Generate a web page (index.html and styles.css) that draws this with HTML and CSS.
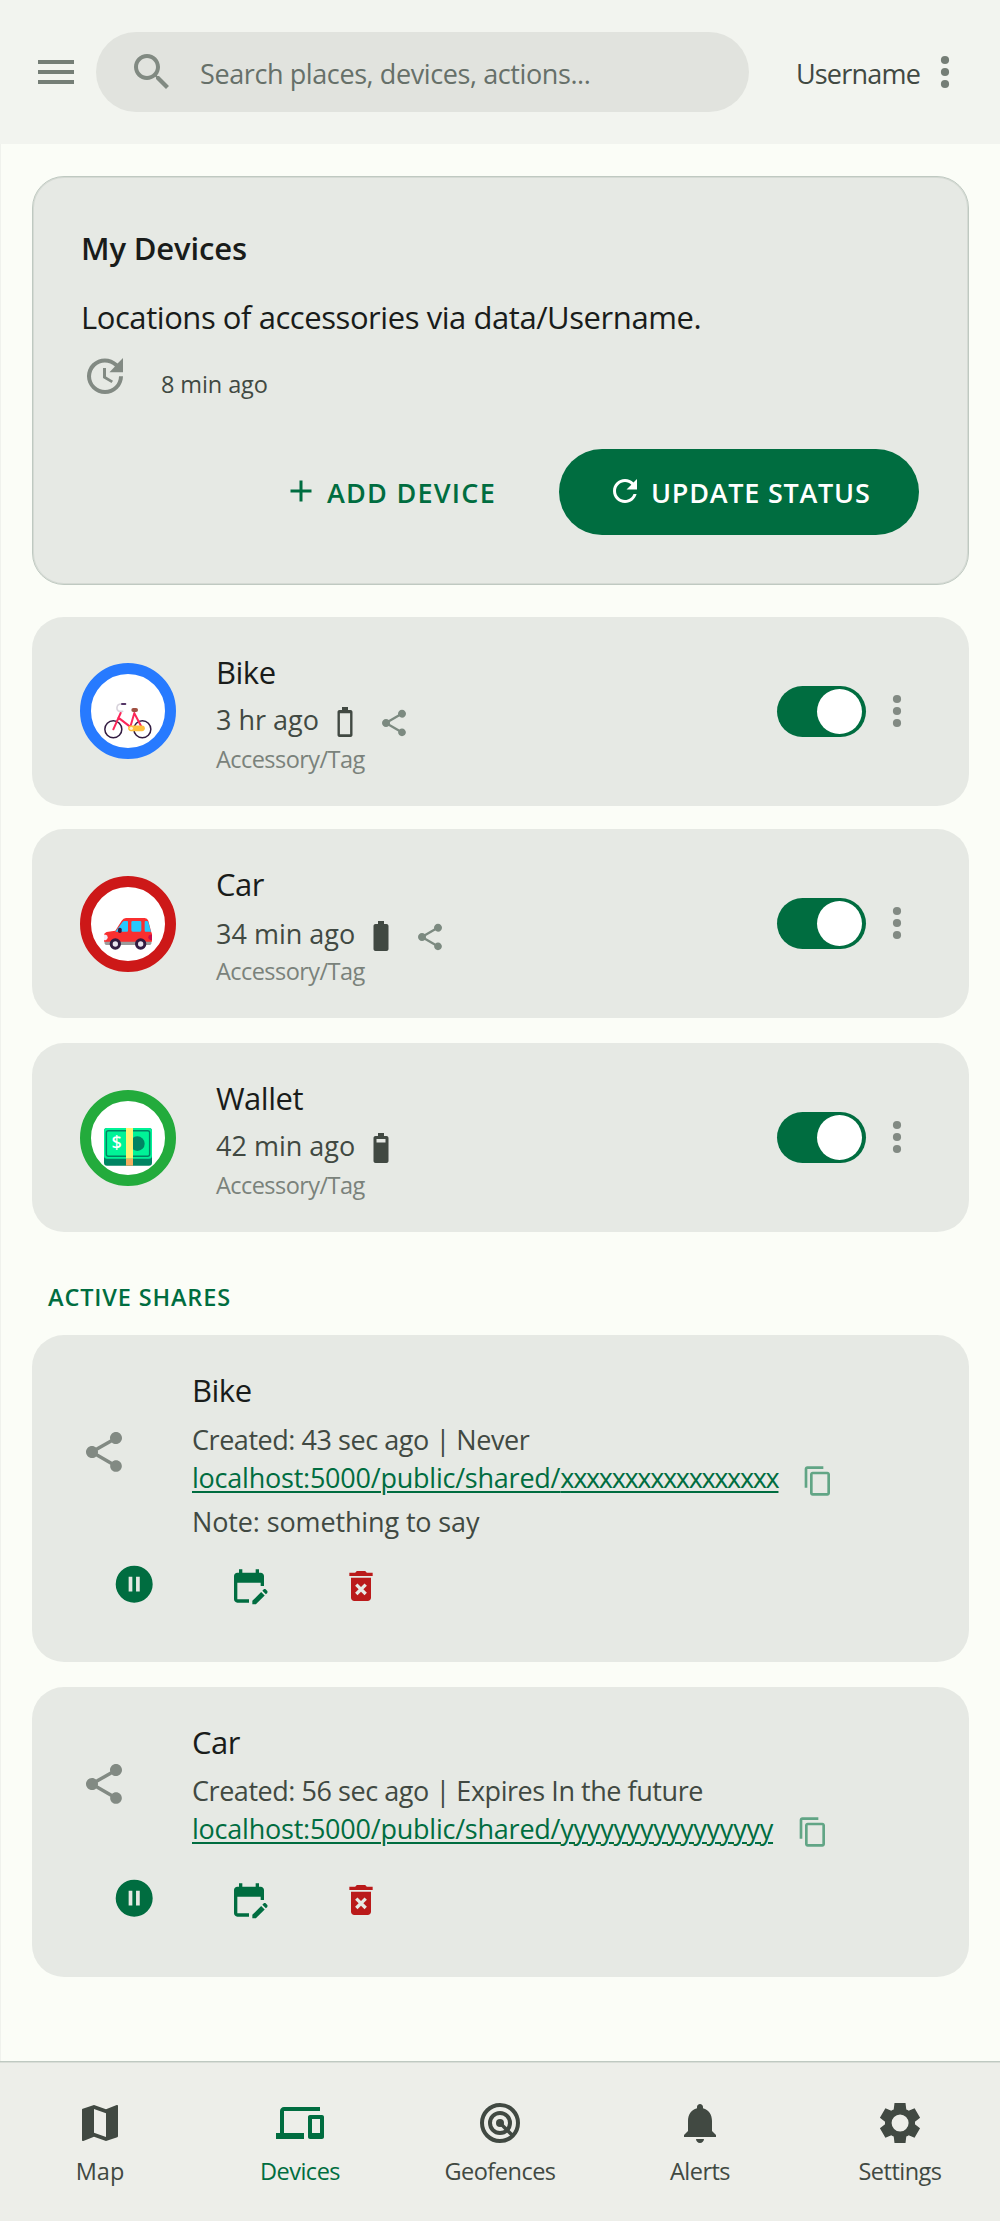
FILE: index.html
```html
<!DOCTYPE html>
<html lang="en">
<head>
<meta charset="utf-8">
<title>My Devices</title>
<link rel="stylesheet" href="styles.css">
</head>
<body>
<svg class="sprite" aria-hidden="true">
  <symbol id="menu" viewBox="0 0 24 24"><path d="M3 18h18v-2H3v2zm0-5h18v-2H3v2zm0-7v2h18V6H3z"/></symbol>
  <symbol id="search" viewBox="0 0 24 24"><path d="M15.5 14h-.79l-.28-.27C15.41 12.59 16 11.11 16 9.5 16 5.91 13.09 3 9.500 3S3 5.910 3 9.500 5.910 16 9.500 16c1.610 0 3.090-.59 4.230-1.570l.27.28v.79l5 4.990L20.490 19l-4.990-5zm-6 0C7.010 14 5 11.990 5 9.500S7.010 5 9.500 5 14 7.010 14 9.500 11.990 14 9.500 14z"/></symbol>
  <symbol id="more" viewBox="0 0 24 24"><circle cx="12" cy="6" r="2.050"/><circle cx="12" cy="12" r="2.050"/><circle cx="12" cy="18" r="2.050"/></symbol>
  <symbol id="history" viewBox="0 0 24 24"><path d="M21 10.120h-6.780l2.740-2.820c-2.730-2.700-7.150-2.800-9.880-.1-2.730 2.710-2.730 7.080 0 9.790s7.150 2.710 9.880 0C18.320 15.650 19 14.080 19 12.100h2c0 1.980-.88 4.550-2.640 6.290-3.510 3.480-9.210 3.480-12.720 0-3.500-3.470-3.530-9.110-.02-12.580s9.140-3.470 12.650 0L21 3v7.120zM12.500 8v4.250l3.500 2.080-.72 1.210L11 13V8h1.500z"/></symbol>
  <symbol id="add" viewBox="0 0 24 24"><path d="M19 13h-6v6h-2v-6H5v-2h6V5h2v6h6v2z"/></symbol>
  <symbol id="refresh" viewBox="0 0 24 24"><path d="M17.650 6.350C16.200 4.900 14.210 4 12 4c-4.420 0-7.990 3.580-7.990 8s3.570 8 7.990 8c3.730 0 6.840-2.550 7.730-6h-2.080c-.82 2.330-3.040 4-5.650 4-3.310 0-6-2.690-6-6s2.690-6 6-6c1.660 0 3.140.69 4.220 1.780L13 11h7V4l-2.350 2.350z"/></symbol>
  <symbol id="battery-empty" viewBox="0 0 24 24"><path fill-rule="evenodd" d="M15.670 4H14V2h-4v2H8.330C7.600 4 7 4.600 7 5.330v15.330C7 21.400 7.600 22 8.330 22h7.330c.74 0 1.340-.6 1.340-1.330V5.330C17 4.600 16.400 4 15.670 4zM8.600 6.200h6.800v14H8.600z"/></symbol>
  <symbol id="battery-full" viewBox="0 0 24 24"><path d="M15.670 4H14V2h-4v2H8.330C7.600 4 7 4.600 7 5.330v15.330C7 21.400 7.600 22 8.330 22h7.330c.74 0 1.340-.6 1.340-1.330V5.330C17 4.600 16.400 4 15.670 4z"/></symbol>
  <symbol id="battery-high" viewBox="0 0 24 24"><path fill-rule="evenodd" d="M15.670 4H14V2h-4v2H8.330C7.600 4 7 4.600 7 5.330v15.330C7 21.400 7.600 22 8.330 22h7.330c.74 0 1.340-.6 1.340-1.330V5.330C17 4.600 16.400 4 15.670 4zM9 6h6v2.300H9z"/></symbol>
  <symbol id="share" viewBox="0 0 24 24"><path d="M18 16.080c-.76 0-1.440.3-1.960.77L8.910 12.700c.05-.23.09-.46.09-.7s-.04-.47-.09-.7l7.050-4.110c.54.5 1.250.81 2.040.81 1.660 0 3-1.340 3-3s-1.340-3-3-3-3 1.340-3 3c0 .24.04.47.09.7L8.040 9.810C7.500 9.310 6.790 9 6 9c-1.660 0-3 1.340-3 3s1.340 3 3 3c.79 0 1.500-.31 2.040-.81l7.120 4.160c-.05.21-.08.43-.08.65 0 1.610 1.310 2.920 2.920 2.920s2.920-1.310 2.920-2.920-1.310-2.920-2.920-2.920z"/></symbol>
  <symbol id="copy" viewBox="0 0 24 24"><path d="M16 1H4c-1.100 0-2 .9-2 2v14h2V3h12V1zm3 4H8c-1.100 0-2 .9-2 2v14c0 1.100.9 2 2 2h11c1.100 0 2-.9 2-2V7c0-1.100-.9-2-2-2zm0 16H8V7h11v14z"/></symbol>
  <symbol id="pause" viewBox="0 0 24 24"><path fill-rule="evenodd" d="M12 2a10 10 0 1 0 0 20 10 10 0 0 0 0-20zM11 16H9V8h2v8zm4 0h-2V8h2v8z"/></symbol>
  <symbol id="calendar-edit" viewBox="0 0 24 24"><path d="M12 22H5c-1.110 0-2-.9-2-2l.01-14c0-1.100.88-2 1.990-2h1V2h2v2h8V2h2v2h1c1.100 0 2 .9 2 2v6h-2v-2H5v10h7v2zm10.130-5.010.71-.71c.39-.39.39-1.020 0-1.410l-.71-.71c-.39-.39-1.020-.39-1.410 0l-.71.71 2.120 2.120zm-.71.71-5.300 5.300H14v-2.120l5.300-5.300 2.120 2.120z"/></symbol>
  <symbol id="delete" viewBox="0 0 24 24"><path fill-rule="evenodd" d="M6 19c0 1.100.9 2 2 2h8c1.100 0 2-.9 2-2V7H6v12zm2.460-7.120 1.410-1.410L12 12.590l2.120-2.120 1.410 1.410L13.410 14l2.120 2.120-1.410 1.410L12 15.410l-2.120 2.120-1.410-1.410L10.590 14zM15.500 4l-1-1h-5l-1 1H5v2h14V4z"/></symbol>
  <symbol id="map" viewBox="0 0 24 24"><path fill-rule="evenodd" d="M20.500 3l-.16.03L15 5.100 9 3 3.360 4.900c-.21.07-.36.25-.36.48V20.500c0 .28.22.5.5.5l.16-.03L9 18.900l6 2.100 5.640-1.900c.21-.07.36-.25.36-.48V3.500c0-.28-.22-.5-.5-.5zM15 19l-6-2.110V5l6 2.110V19z"/></symbol>
  <symbol id="devices" viewBox="0 0 24 24"><path d="M4 6h18V4H4c-1.100 0-2 .9-2 2v11H0v3h14v-3H4V6zm19 2h-6c-.55 0-1 .45-1 1v10c0 .55.45 1 1 1h6c.55 0 1-.45 1-1V9c0-.55-.45-1-1-1zm-1 9h-4v-7h4v7z"/></symbol>
  <symbol id="geofence" viewBox="0 0 24 24"><g fill="none" stroke="currentColor" stroke-width="2"><circle cx="12" cy="12" r="9"/><circle cx="12" cy="12" r="5"/><path d="M12 12l6.400 6.400" stroke-width="1.700"/></g><circle cx="12" cy="12" r="2"/></symbol>
  <symbol id="bell" viewBox="0 0 24 24"><path d="M12 22c1.100 0 2-.9 2-2h-4c0 1.100.89 2 2 2zm6-6v-5c0-3.070-1.640-5.640-4.500-6.320V4c0-.83-.67-1.500-1.500-1.500s-1.500.67-1.500 1.500v.68C7.630 5.360 6 7.920 6 11v5l-2 2v1h16v-1l-2-2z"/></symbol>
  <symbol id="gear" viewBox="0 -960 960 960"><path d="m370-80-16-128q-13-5-24.500-12T307-235l-119 50L78-375l103-78q-1-7-1-13.500v-27q0-6.500 1-13.500L78-585l110-190 119 50q11-8 23-15t24-12l16-128h220l16 128q13 5 24.500 12t22.500 15l119-50 110 190-103 78q1 7 1 13.500v27q0 6.500-2 13.500l103 78-110 190-118-50q-11 8-23 15t-24 12L590-80H370Zm112-230q70 0 120-50t50-120q0-70-50-120t-120-50q-71 0-120.500 50T312-480q0 70 49.500 120T482-310Z"/></symbol>
</svg>

<header class="topbar">
  <svg class="icon i48 muted"><use href="#menu"/></svg>
  <div class="search">
    <svg class="icon i48 muted"><use href="#search"/></svg>
    <span class="search-text">Search places, devices, actions...</span>
  </div>
  <div class="user"><span>Username</span><svg class="icon i48 muted"><use href="#more"/></svg></div>
</header>

<main class="content">
  <section class="card summary">
    <h1>My Devices</h1>
    <p class="lead">Locations of accessories via data/Username.</p>
    <div class="updated"><svg class="icon i48 soft"><use href="#history"/></svg><span>8 min ago</span></div>
    <div class="buttons">
      <div class="btn btn-text"><svg class="icon i36"><use href="#add"/></svg><span>ADD DEVICE</span></div>
      <div class="btn btn-filled"><svg class="icon i36"><use href="#refresh"/></svg><span>UPDATE STATUS</span></div>
    </div>
  </section>

  <section class="devices">
    <article class="card device">
      <div class="avatar blue">
        <svg class="emoji" viewBox="0 0 144 144" fill="none" stroke-linecap="round" stroke-linejoin="round">
          <g stroke="#321b41" stroke-width="4.500"><circle cx="28" cy="97" r="25.500"/><circle cx="115" cy="97" r="25.500"/></g>
          <path d="M54 21h-3c-15 0-16 21-4 22h9" stroke="#d9d4dc" stroke-width="5"/>
          <path d="M54 21h10" stroke="#533566" stroke-width="6"/>
          <path d="M50 48L28 97M43 62l34 26M91 48l-11 38M91 49l22 42" stroke="#fc2658" stroke-width="6"/>
          <rect x="82" y="33" width="20" height="12" rx="6" fill="#a05042"/>
          <path d="M81 94h33" stroke="#ffc03d" stroke-width="17"/><circle cx="82" cy="94" r="5" fill="#fff2d0"/>
        </svg>
      </div>
      <div class="info">
        <h2>Bike</h2>
        <div class="status"><span>3 hr ago</span><svg class="icon i36"><use href="#battery-empty"/></svg><svg class="icon i32 shared"><use href="#share"/></svg></div>
        <p class="kind">Accessory/Tag</p>
      </div>
      <div class="toggle"><i></i></div>
      <svg class="icon i48 soft more"><use href="#more"/></svg>
    </article>

    <article class="card device">
      <div class="avatar red">
        <svg class="emoji" viewBox="0 0 144 144">
          <rect x="2" y="92" width="140" height="13" rx="5" fill="#9b9b9b"/>
          <path d="M66 24h56q8 0 11 8l8 32 3 8v23H0V76q0-8 8-10l26-4 19-30q5-8 13-8z" fill="#f92f2f"/>
          <path d="M55 37q2-4 7-4h8q2 0 2 3v26q0 3-3 3H34zM82 37q0-4 4-4h22q4 0 4 4v24q0 4-4 4H86q-4 0-4-4zM122 36q0-3 3-3h3q4 0 5 4l8 28h-16q-3 0-3-3z" fill="#26c9fc"/>
          <rect x="42" y="53" width="11" height="16" rx="5" fill="#321b41"/>
          <path d="M0 74h5q6 0 6 8t-6 9H0z" fill="#f3eef8"/><path d="M144 74h-5q-6 0-6 8t6 8h5z" fill="#ca0b4a"/>
          <g fill="#e9e4ee" stroke="#321b41" stroke-width="9"><circle cx="34" cy="102" r="12.500"/><circle cx="110" cy="102" r="12.500"/></g>
        </svg>
      </div>
      <div class="info">
        <h2>Car</h2>
        <div class="status"><span>34 min ago</span><svg class="icon i36"><use href="#battery-full"/></svg><svg class="icon i32 shared"><use href="#share"/></svg></div>
        <p class="kind">Accessory/Tag</p>
      </div>
      <div class="toggle"><i></i></div>
      <svg class="icon i48 soft more"><use href="#more"/></svg>
    </article>

    <article class="card device">
      <div class="avatar green">
        <svg class="emoji" viewBox="0 0 144 144">
          <rect y="12" width="144" height="113" rx="9" fill="#008463"/>
          <rect y="12" width="144" height="92" rx="9" fill="#00f397"/>
          <rect x="7" y="20" width="130" height="77" rx="6" fill="none" stroke="#008463" stroke-width="4.500"/>
          <circle cx="100" cy="59" r="22" fill="#008463"/>
          <path d="M66 12h21v92H66z" fill="#fff275"/><path d="M66 104h21v21H66z" fill="#f3ad61"/>
          <text class="dollar" x="38" y="76" text-anchor="middle">$</text>
        </svg>
      </div>
      <div class="info">
        <h2>Wallet</h2>
        <div class="status"><span>42 min ago</span><svg class="icon i36"><use href="#battery-high"/></svg></div>
        <p class="kind">Accessory/Tag</p>
      </div>
      <div class="toggle"><i></i></div>
      <svg class="icon i48 soft more"><use href="#more"/></svg>
    </article>
  </section>

  <h3 class="section-title">ACTIVE SHARES</h3>

  <section class="shares">
    <article class="card share with-note">
      <div class="share-main">
        <svg class="icon i48 soft"><use href="#share"/></svg>
        <div>
          <h2>Bike</h2>
          <p class="created">Created: 43 sec ago | Never</p>
          <div class="link-row"><a>localhost:5000/public/shared/<span class="token">xxxxxxxxxxxxxxxxx</span></a><svg class="icon i32 copy"><use href="#copy"/></svg></div>
          <p class="note">Note: something to say</p>
        </div>
      </div>
      <div class="actions">
        <svg class="icon i44"><use href="#pause"/></svg>
        <svg class="icon i40 low"><use href="#calendar-edit"/></svg>
        <svg class="icon i40 low danger"><use href="#delete"/></svg>
      </div>
    </article>
    <article class="card share">
      <div class="share-main">
        <svg class="icon i48 soft"><use href="#share"/></svg>
        <div>
          <h2>Car</h2>
          <p class="created">Created: 56 sec ago | Expires In the future</p>
          <div class="link-row"><a>localhost:5000/public/shared/yyyyyyyyyyyyyyyy</a><svg class="icon i32 copy"><use href="#copy"/></svg></div>
        </div>
      </div>
      <div class="actions">
        <svg class="icon i44"><use href="#pause"/></svg>
        <svg class="icon i40 low"><use href="#calendar-edit"/></svg>
        <svg class="icon i40 low danger"><use href="#delete"/></svg>
      </div>
    </article>
  </section>
</main>

<nav class="tabs">
  <div class="tab"><svg class="icon i48"><use href="#map"/></svg><span class="wide">Map</span></div>
  <div class="tab active"><svg class="icon i48"><use href="#devices"/></svg><span>Devices</span></div>
  <div class="tab"><svg class="icon i48"><use href="#geofence"/></svg><span>Geofences</span></div>
  <div class="tab"><svg class="icon i48"><use href="#bell"/></svg><span>Alerts</span></div>
  <div class="tab"><svg class="icon i48"><use href="#gear"/></svg><span>Settings</span></div>
</nav>
</body>
</html>
```
FILE: styles.css
```css
* { box-sizing: border-box; }

body {
  margin: 0;
  min-height: 2221px;
  display: flex;
  flex-direction: column;
  background: #fbfdf7;
  color: #191c1a;
  font-family: "Open Sans", "Noto Sans", sans-serif;
  font-size: 27px;
  letter-spacing: -0.45px;
}

h1, h2, h3, p { margin: 0; font-weight: 400; }

.sprite { display: none; }
.icon { flex: none; display: block; fill: currentColor; }
.i32 { width: 32px; height: 32px; }
.i36 { width: 36px; height: 36px; }
.i40 { width: 40px; height: 40px; }
.i44 { width: 44.400px; height: 44.400px; }
.i48 { width: 48px; height: 48px; }
.muted { color: #757e76; }
.soft { color: #828a83; }

/* Top bar */
.topbar {
  height: 144px;
  padding: 0 31px 0 32px;
  display: flex;
  align-items: center;
  background: #f2f4ef;
  color: #414942;
}
.search {
  width: 653px;
  height: 80px;
  margin-left: 16px;
  padding: 0 32px;
  display: flex;
  align-items: center;
  gap: 24px;
  border-radius: 40px;
  background: #e1e3de;
  color: #667069;
}
.search .icon { color: #818a82; }
.search-text { padding-top: 3px; letter-spacing: -0.400px; }
.user {
  flex: 1;
  display: flex;
  align-items: center;
  justify-content: flex-end;
  letter-spacing: -0.8px;
}
.user span { padding: 3px 1px 0 0; }

/* Main column */
.content {
  flex: 1;
  padding: 32px 31px 0 32px;
  box-shadow: inset 1px 0 #f0f2ed;
}
.card {
  border-radius: 32px;
  background: #e6e9e4;
}

.summary {
  height: 409px;
  padding: 49px 49px 0 48px;
  border: 1px solid #bfc9c1;
  box-shadow: inset 0 0 0 1px #d5dad4;
}
.summary h1 {
  font-size: 31px;
  line-height: 44px;
  font-weight: 600;
  letter-spacing: -0.150px;
}
.lead {
  margin-top: 25px;
  font-size: 31px;
  line-height: 44px;
  letter-spacing: -0.440px;
}
.updated {
  margin-top: 13px;
  display: flex;
  align-items: flex-end;
  gap: 32px;
  color: #414942;
  font-size: 23.500px;
  line-height: 32px;
  letter-spacing: -0.1px;
}
.buttons {
  margin-top: 49px;
  display: flex;
  justify-content: flex-end;
  gap: 63px;
}
.btn {
  height: 86px;
  display: flex;
  align-items: center;
  gap: 8px;
  font-weight: 600;
  letter-spacing: 0.750px;
}
.btn .icon { margin-bottom: 3px; }
.btn-text { color: #006d40; letter-spacing: 1.250px; }
.btn-filled {
  width: 360px;
  padding-left: 48px;
  border-radius: 43px;
  background: #006d40;
  color: #fff;
}

/* Device list */
.devices {
  margin-top: 32px;
  display: flex;
  flex-direction: column;
}
.device {
  height: 189px;
  padding: 0 48px;
  display: flex;
  align-items: center;
}
.device:nth-child(2) { margin: 23px 0 25px; }

.avatar {
  width: 96px;
  height: 96px;
  padding-top: 20px;
  display: grid;
  place-items: center;
  border: 11px solid;
  border-radius: 50%;
  background: #fff;
}
.blue { border-color: #277aff; margin-bottom: 1px; }
.red { border-color: #cd1818; }
.green { border-color: #23ab3c; }
.emoji { width: 48px; height: 48px; display: block; }
.dollar { font: 500 54px "Noto Sans", sans-serif; fill: #fff; }

.info {
  flex: 1;
  align-self: flex-start;
  padding: 33px 0 0 40px;
}
h2 {
  font-size: 31px;
  line-height: 44px;
  letter-spacing: -0.5px;
}
.status {
  margin-top: 6px;
  height: 40px;
  display: flex;
  align-items: flex-end;
  line-height: 40px;
  letter-spacing: 0;
  color: #414942;
}
.device:nth-child(2) .status { margin: 8px 0 -2px; }
.status .i36 { margin-left: 8px; }
.shared { margin: 0 0 1px 15px; color: #7c8a80; }
.kind {
  margin-top: 3px;
  font-size: 23.500px;
  line-height: 32px;
  letter-spacing: -0.550px;
  color: #7a827b;
}
.device:nth-child(2) .kind { margin-top: 3px; }
.toggle {
  width: 89px;
  height: 51px;
  margin: 0 7px 1px 0;
  padding: 3px 4px;
  display: flex;
  justify-content: flex-end;
  border-radius: 26px;
  background: #006d40;
}
.toggle i {
  width: 45px;
  height: 45px;
  border-radius: 50%;
  background: #fff;
}
.more { margin-bottom: 1px; }

/* Active shares */
.section-title {
  margin: 49px 0 22px 16px;
  font-size: 23.500px;
  line-height: 32px;
  font-weight: 600;
  letter-spacing: 0.850px;
  color: #006d40;
}
.shares {
  display: flex;
  flex-direction: column;
  gap: 25px;
}
.share {
  height: 290px;
  padding: 33px 48px 55px;
  display: flex;
  flex-direction: column;
  justify-content: space-between;
}
.with-note { height: 327px; padding-bottom: 54px; }
.share-main {
  display: flex;
  align-items: center;
  gap: 64px;
  line-height: 38px;
  color: #414942;
}
.with-note .share-main > .icon { margin-bottom: 5px; }
.share h2 { color: #191c1a; }
.created { margin-top: 8px; }
.with-note .created { margin-top: 9px; }
.note { margin-top: 6px; letter-spacing: -0.130px; }
.link-row {
  height: 38px;
  display: flex;
  align-items: flex-end;
  gap: 24px;
}
.link-row a {
  color: #006d40;
  letter-spacing: -0.230px;
  text-decoration: underline;
  text-decoration-thickness: 2px;
  text-underline-offset: 3px;
}
.token { letter-spacing: -1.300px; }
.copy { color: #61a585; }
.actions {
  height: 48px;
  padding-left: 32px;
  display: flex;
  align-items: center;
  gap: 72.500px;
  color: #006d40;
}
.low { margin-top: 3px; }
.danger { color: #ba1a1a; }

/* Bottom tabs */
.tabs {
  height: 160px;
  padding-top: 37px;
  display: grid;
  grid-template-columns: repeat(5, 1fr);
  border-top: 1px solid #bfc9c1;
  box-shadow: inset 0 1px #d9ddd7;
  background: #edeee9;
  color: #414942;
}
.tab {
  display: flex;
  flex-direction: column;
  align-items: center;
  gap: 8px;
  font-size: 23.500px;
  line-height: 32px;
  letter-spacing: -0.500px;
}
.active { color: #006d40; }
.wide { letter-spacing: 0; }
```
